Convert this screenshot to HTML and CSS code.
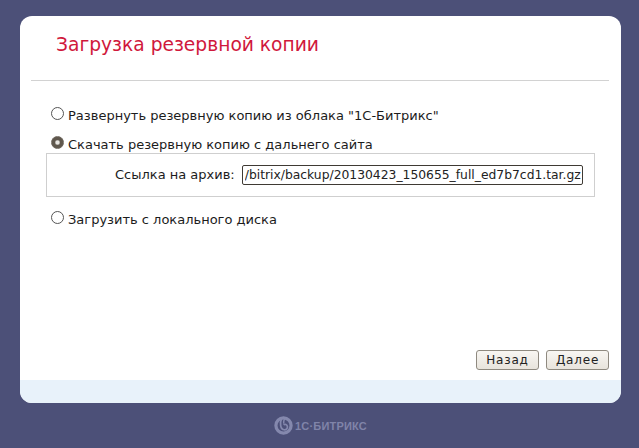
FILE: index.html
```html
<!DOCTYPE html>
<html lang="ru">
<head>
<meta charset="utf-8">
<title>Загрузка резервной копии</title>
<link rel="stylesheet" href="styles.css">
</head>
<body>
<main class="card">
  <div class="head"><h1 class="title">Загрузка резервной копии</h1></div>
  <div class="rule"></div>
  <form class="content">
    <label class="option opt-first"><input class="radio" type="radio" name="src"><span>Развернуть резервную копию из облака "1С-Битрикс"</span></label>
    <label class="option opt-second"><input class="radio" type="radio" name="src" checked><span>Скачать резервную копию с дальнего сайта</span></label>
    <div class="panel">
      <span class="field-label">Ссылка на архив:</span>
      <input class="field" type="text" value="/bitrix/backup/20130423_150655_full_ed7b7cd1.tar.gz">
    </div>
    <label class="option opt-third"><input class="radio" type="radio" name="src"><span>Загрузить с локального диска</span></label>
    <div class="actions">
      <button class="btn" type="button">Назад</button>
      <button class="btn" type="button">Далее</button>
    </div>
  </form>
  <div class="band"></div>
</main>
<footer class="brand">
  <svg class="brand-icon" width="19" height="19" viewBox="0 0 20 20" aria-hidden="true">
    <circle cx="10" cy="10" r="8" fill="none" stroke="#8488ad" stroke-width="3.400"/>
    <path d="M8 2.500C6 7 6.500 14 10.500 14.500c2.500.3 4-1.600 3.600-3.600-.4-2-2.600-2.800-4-1.600" fill="none" stroke="#8488ad" stroke-width="1.800"/>
    <path d="M11 3c-.8 1.800-1 3.500-.8 5" fill="none" stroke="#8488ad" stroke-width="1.500"/>
  </svg>
  <span class="brand-text">1С·БИТРИКС</span>
</footer>
</body>
</html>
```
FILE: styles.css
```css
html, body {
  margin: 0;
  height: 100%;
}
body {
  background: #4c5078;
  box-sizing: border-box;
  width: 639px;
  height: 448px;
  padding: 16px 18px 0 20px;
  overflow: hidden;
  font-family: "DejaVu Sans", sans-serif;
  color: #1c1c1c;
}
.card {
  height: 387px;
  background: #fff;
  border-radius: 12px;
  display: flex;
  flex-direction: column;
  overflow: hidden;
}
.head {
  height: 64px;
  box-sizing: border-box;
  padding: 18px 0 0 36px;
}
.title {
  margin: 0;
  font-size: 18.67px;
  line-height: 22px;
  font-weight: 400;
  color: #d0183c;
}
.rule {
  height: 1px;
  margin: 0 12px 0 11px;
  background: #d2d2d2;
}
.content {
  flex: 1;
  display: flex;
  flex-direction: column;
  padding: 0 12px 0 26px;
  font-size: 13px;
}
.option {
  display: flex;
  align-items: center;
  gap: 4px;
  height: 16px;
  white-space: nowrap;
}
.opt-first { margin: 26px 0 0 5px; }
.opt-second { margin: 13px 0 0 5px; }
.opt-third { margin: 14px 0 0 5px; }
.radio {
  appearance: none;
  margin: -3px 0 0;
  width: 13px;
  height: 13px;
  box-sizing: border-box;
  border: 1px solid #555;
  border-radius: 50%;
  background: #fff;
}
.radio:checked {
  background: radial-gradient(circle, #e8e6e2 0 1.500px, #5f574d 3px);
  border-color: #6e675e;
}
.panel {
  height: 44px;
  box-sizing: border-box;
  border: 1px solid #cfcfcf;
  display: flex;
  align-items: center;
  margin: 1px 14px 0 0;
  padding: 0 11px 0 68px;
  gap: 7px;
}
.field-label {
  white-space: nowrap;
  margin-bottom: 2px;
}
.field {
  flex: 1;
  min-width: 0;
  height: 20px;
  box-sizing: border-box;
  padding: 0 0 0 2px;
  border: 1px solid #3f3a34;
  border-radius: 2px;
  font-family: "DejaVu Sans", sans-serif;
  font-size: 12.33px;
  color: #222;
  outline: none;
}
.actions {
  margin-top: auto;
  margin-bottom: 10px;
  display: flex;
  justify-content: flex-end;
  gap: 7px;
}
.btn {
  width: 63px;
  height: 20px;
  padding: 0;
  border: 1px solid #8f8a80;
  border-radius: 3px;
  background: linear-gradient(#f8f6f2, #e8e4dc);
  font-family: "DejaVu Sans", sans-serif;
  font-size: 12px;
  letter-spacing: 0.8px;
  color: #222;
}
.band {
  height: 23px;
  background: #e8f2fa;
}
.brand {
  display: flex;
  justify-content: center;
  align-items: center;
  gap: 2px;
  margin-top: 13px;
}
.brand-text {
  font-family: "Liberation Sans", sans-serif;
  font-weight: 700;
  font-size: 11px;
  color: #8084a9;
  letter-spacing: 0.2px;
}
```
